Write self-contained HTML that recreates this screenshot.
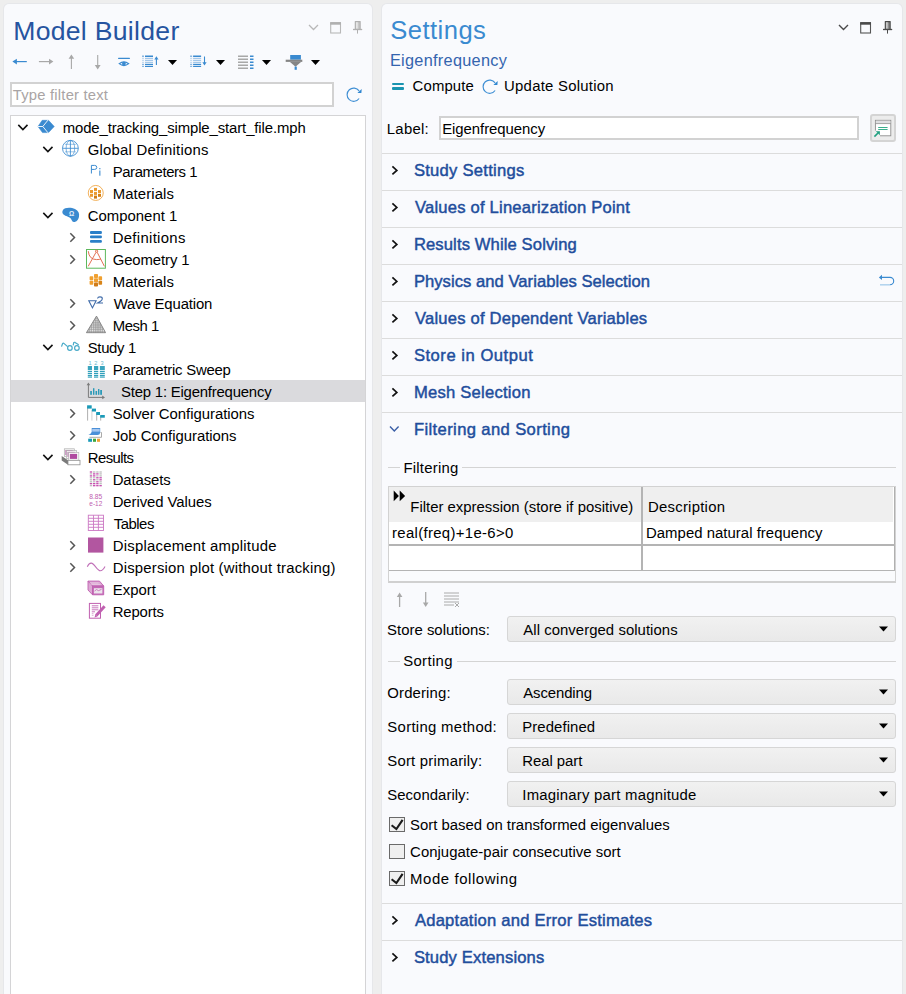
<!DOCTYPE html>
<html><head><meta charset="utf-8"><style>
html,body{margin:0;padding:0;}
body{width:906px;height:994px;overflow:hidden;position:relative;background:#eeeeee;font-family:"Liberation Sans",sans-serif;}
.t{position:absolute;white-space:nowrap;line-height:1;font-family:"Liberation Sans",sans-serif;}
svg{overflow:visible}
</style></head><body>
<div style="position:absolute;left:4px;top:4px;width:368px;height:1000px;background:#f9fafd;border-radius:5px;box-shadow:0 0 0 1px #e6e7ea;"></div>
<div style="position:absolute;left:382px;top:4px;width:520px;height:1000px;background:#f9fafd;border-radius:5px;box-shadow:0 0 0 1px #e6e7ea;"></div>
<div class="t" style="left:13.20px;top:17.88px;font-size:26.60px;color:#2654a0;letter-spacing:0.288px;">Model Builder</div>
<svg style="position:absolute;left:302px;top:18px" width="64" height="20" viewBox="0 0 64 20"><path d="M7 7 L11.5 11.5 L16 7" fill="none" stroke="#b8b8b8" stroke-width="1.3"/><rect x="28.7" y="5" width="9.8" height="10" fill="none" stroke="#b8b8b8" stroke-width="1.1"/><rect x="28.2" y="4.1" width="10.8" height="2.6" fill="#b0b0b0"/><rect x="53" y="3.3" width="5.4" height="8" fill="#c8c8c8"/><path d="M53.3 3.3 V11.3 M58.1 3.3 V11.3 M53 3.6 H58.4" stroke="#b0b0b0" stroke-width="1.1"/><rect x="54.2" y="4.2" width="1.4" height="6.5" fill="#eeeeee"/><path d="M51 11.5 H60.2" stroke="#b0b0b0" stroke-width="1.3"/><path d="M55.5 11.5 V15.6" stroke="#b0b0b0" stroke-width="1"/></svg>
<svg style="position:absolute;left:10px;top:52px" width="320" height="20" viewBox="0 0 320 20"><path d="M6 9.6 H16.8" stroke="#3a8ad0" stroke-width="1.2"/><path d="M2.4 9.6 L6.9 6.7 V12.5 Z" fill="#3a8ad0"/><path d="M28.9 9.6 H40" stroke="#a8a8a8" stroke-width="1.2"/><path d="M43.4 9.6 L39 6.7 V12.5 Z" fill="#a8a8a8"/><path d="M61.4 6 V16.9" stroke="#a8a8a8" stroke-width="1.1"/><path d="M61.4 2.5 L58.6 6.8 H64.2 Z" fill="#a8a8a8"/><path d="M87.7 3.1 V13.5" stroke="#a8a8a8" stroke-width="1.1"/><path d="M87.7 17.6 L84.8 12.9 H90.6 Z" fill="#a8a8a8"/><path d="M108.6 6.3 H119.4" stroke="#3a8ad0" stroke-width="1.3" stroke-linecap="round"/><path d="M109.2 11.65 Q113.9 7.9 118.7 11.65 Q113.9 15.4 109.2 11.65 Z" fill="none" stroke="#3a8ad0" stroke-width="1.2"/><circle cx="113.9" cy="11.65" r="1.9" fill="#3a8ad0"/><rect x="132.0" y="3.5" width="2" height="1.5" fill="#3a8ad0" opacity="0.60"/><rect x="135.0" y="3.5" width="8" height="1.5" fill="#3a8ad0" opacity="1.00"/><rect x="132.0" y="5.8" width="2" height="1.2" fill="#3a8ad0" opacity="0.27"/><rect x="135.0" y="5.8" width="8" height="1.2" fill="#3a8ad0" opacity="0.45"/><rect x="132.0" y="7.8" width="2" height="1.2" fill="#3a8ad0" opacity="0.27"/><rect x="135.0" y="7.8" width="8" height="1.2" fill="#3a8ad0" opacity="0.45"/><rect x="132.0" y="9.8" width="2" height="1.2" fill="#3a8ad0" opacity="0.27"/><rect x="135.0" y="9.8" width="8" height="1.2" fill="#3a8ad0" opacity="0.45"/><rect x="132.0" y="11.8" width="2" height="1.2" fill="#3a8ad0" opacity="0.60"/><rect x="135.0" y="11.8" width="8" height="1.2" fill="#3a8ad0" opacity="1.00"/><rect x="132.0" y="13.8" width="2" height="1.2" fill="#3a8ad0" opacity="0.60"/><rect x="135.0" y="13.8" width="8" height="1.2" fill="#3a8ad0" opacity="1.00"/><path d="M146.4 6 V13" stroke="#3a8ad0" stroke-width="1.1"/><path d="M146.4 4.3 L144.3 7.6 H148.5 Z" fill="#3a8ad0"/><path d="M158 8 H167 L162.5 13 Z" fill="#000"/><rect x="180.1" y="3.5" width="2" height="1.5" fill="#3a8ad0" opacity="0.60"/><rect x="183.1" y="3.5" width="8" height="1.5" fill="#3a8ad0" opacity="1.00"/><rect x="180.1" y="5.8" width="2" height="1.2" fill="#3a8ad0" opacity="0.27"/><rect x="183.1" y="5.8" width="8" height="1.2" fill="#3a8ad0" opacity="0.45"/><rect x="180.1" y="7.8" width="2" height="1.2" fill="#3a8ad0" opacity="0.27"/><rect x="183.1" y="7.8" width="8" height="1.2" fill="#3a8ad0" opacity="0.45"/><rect x="180.1" y="9.8" width="2" height="1.2" fill="#3a8ad0" opacity="0.27"/><rect x="183.1" y="9.8" width="8" height="1.2" fill="#3a8ad0" opacity="0.45"/><rect x="180.1" y="11.8" width="2" height="1.2" fill="#3a8ad0" opacity="0.60"/><rect x="183.1" y="11.8" width="8" height="1.2" fill="#3a8ad0" opacity="1.00"/><rect x="180.1" y="13.8" width="2" height="1.2" fill="#3a8ad0" opacity="0.60"/><rect x="183.1" y="13.8" width="8" height="1.2" fill="#3a8ad0" opacity="1.00"/><path d="M194.5 4.5 V11.5" stroke="#3a8ad0" stroke-width="1.1"/><path d="M194.5 13.6 L192.4 10.3 H196.6 Z" fill="#3a8ad0"/><path d="M206 8 H215 L210.5 13 Z" fill="#000"/><g fill="#a8a8a8"><rect x="228" y="3.5" width="10" height="1.5"/><rect x="228" y="6.5" width="10" height="1.5"/><rect x="228" y="9.5" width="10" height="1.5"/><rect x="228" y="12.5" width="10" height="1.5"/><rect x="228" y="15.5" width="10" height="1.5"/></g><g fill="#3a8ad0"><rect x="240" y="3.5" width="3.5" height="1.5"/><rect x="240" y="6.5" width="3.5" height="1.5"/><rect x="240" y="9.5" width="3.5" height="1.5"/><rect x="240" y="12.5" width="3.5" height="1.5"/><rect x="240" y="15.5" width="3.5" height="1.5"/></g><path d="M252 8 H261 L256.5 13 Z" fill="#000"/><rect x="280.2" y="3" width="10.7" height="4.7" fill="#3a8ad0"/><rect x="275.7" y="7.7" width="16.6" height="2.2" fill="#858585"/><path d="M280 9.9 H291 L285.5 14.8 Z" fill="#858585"/><rect x="284.6" y="14.6" width="2.2" height="3.2" fill="#3a8ad0"/><path d="M301 8 H310 L305.5 13 Z" fill="#000"/></svg>
<div style="position:absolute;left:10px;top:82.2px;width:323.8px;height:24.6px;background:#fff;box-sizing:border-box;border:2px solid #d2d2d2;"></div>
<div class="t" style="left:12.80px;top:88.17px;font-size:14.80px;color:#a9a4a4;letter-spacing:0.205px;">Type filter text</div>
<svg style="position:absolute;left:344px;top:86px" width="20" height="20" viewBox="0 0 20 20"><path d="M15.1 4.9 A6.6 6.6 0 1 0 15.1 12.5" fill="none" stroke="#3f8fd4" stroke-width="1.15"/><path d="M17.7 3 L17.4 7 L13.4 7 Z" fill="#2f86d0"/></svg>
<div style="position:absolute;left:10px;top:115px;width:356px;height:900px;background:#fff;box-sizing:border-box;border:1px solid #d4d4d6;"></div>
<div style="position:absolute;left:11px;top:380px;width:354px;height:21.6px;background:#dadadd;"></div>
<svg style="position:absolute;left:16.5px;top:121px" width="12" height="10" viewBox="0 0 12 10"><path d="M1.3 3.9 L5.9 8.5 L10.5 3.9" fill="none" stroke="#111" stroke-width="1.6"/></svg>
<svg style="position:absolute;left:37px;top:116px" width="22" height="22" viewBox="0 0 22 22"><path d="M1 10.5 L5.2 4.3 L11.5 4.3 L17.2 10.5 L11.5 16.6 L5.5 16.6 Z" fill="#3a8ad0" stroke="#3a8ad0" stroke-width="0.6" stroke-linejoin="round"/><path d="M0.6 10.5 H5.8 L11 4.1 M5.8 10.5 L11 16.8" fill="none" stroke="#fff" stroke-width="0.9"/></svg>
<div class="t" style="left:62.70px;top:120.69px;font-size:14.90px;color:#000;letter-spacing:-0.106px;">mode_tracking_simple_start_file.mph</div>
<svg style="position:absolute;left:41.5px;top:143px" width="12" height="10" viewBox="0 0 12 10"><path d="M1.3 3.9 L5.9 8.5 L10.5 3.9" fill="none" stroke="#111" stroke-width="1.6"/></svg>
<svg style="position:absolute;left:62px;top:138px" width="22" height="22" viewBox="0 0 22 22"><g fill="none" stroke="#3a8ad0" stroke-width="0.85"><circle cx="8.4" cy="10.3" r="7.9"/><ellipse cx="8.4" cy="10.3" rx="4.3" ry="7.9" opacity="0.75"/><path d="M8.4 2.4 V18.2 M0.5 10.3 H16.3"/><path d="M3 6.3 H13.8 M3 13.8 H13.8" opacity="0.6"/></g></svg>
<div class="t" style="left:87.70px;top:142.69px;font-size:14.90px;color:#000;letter-spacing:0.237px;">Global Definitions</div>
<svg style="position:absolute;left:87px;top:160px" width="22" height="22" viewBox="0 0 22 22"><path d="M4.4 13.5 V5.4 H7.6 Q9.8 5.4 9.8 7.4 Q9.8 9.4 7.6 9.4 H4.4" fill="none" stroke="#3a8ad0" stroke-width="1"/><rect x="12.3" y="8" width="1.1" height="1.3" fill="#3a8ad0"/><rect x="12.3" y="10.5" width="1.1" height="5.2" fill="#3a8ad0"/></svg>
<div class="t" style="left:112.70px;top:164.69px;font-size:14.90px;color:#000;letter-spacing:-0.403px;">Parameters 1</div>
<svg style="position:absolute;left:87px;top:182px" width="22" height="22" viewBox="0 0 22 22"><circle cx="8.75" cy="10.95" r="7.5" fill="none" stroke="#f0a848" stroke-width="0.9"/><g fill="#eb9a2e"><rect x="7" y="5.9" width="3" height="3"/><rect x="3" y="8" width="3" height="3"/><rect x="7" y="9.9" width="3" height="3"/><rect x="11" y="8" width="3" height="3"/><rect x="3" y="11.8" width="3" height="3"/><rect x="11" y="11.8" width="3" height="3" fill="#d88010"/><rect x="7" y="13.6" width="3" height="3" fill="#d07a10"/></g></svg>
<div class="t" style="left:112.70px;top:186.69px;font-size:14.90px;color:#000;letter-spacing:0.107px;">Materials</div>
<svg style="position:absolute;left:41.5px;top:209px" width="12" height="10" viewBox="0 0 12 10"><path d="M1.3 3.9 L5.9 8.5 L10.5 3.9" fill="none" stroke="#111" stroke-width="1.6"/></svg>
<svg style="position:absolute;left:62px;top:204px" width="22" height="22" viewBox="0 0 22 22"><path d="M1 6 C2.5 3.2 9 3 13 5 C16.5 6.8 17.6 9.5 17 12.5 C16.5 16 14 18.3 11.8 18 C9.6 17.7 10 15 7.5 13.5 C5 12.2 1.2 11.5 0.4 8.8 C0.2 7.8 0.5 6.8 1 6 Z" fill="#3a8ad0"/><text x="7" y="11.7" font-family="Liberation Sans" font-size="6.5" font-weight="bold" fill="#e8f0fa">Ω</text></svg>
<div class="t" style="left:87.70px;top:208.69px;font-size:14.90px;color:#000;letter-spacing:0.024px;">Component 1</div>
<svg style="position:absolute;left:66.5px;top:230px" width="10" height="14" viewBox="0 0 10 14"><path d="M3.3 3.3 L7.5 7.5 L3.3 11.7" fill="none" stroke="#555" stroke-width="1.5"/></svg>
<svg style="position:absolute;left:87px;top:226px" width="22" height="22" viewBox="0 0 22 22"><g fill="#2a7fc8"><rect x="3" y="5.1" width="11.9" height="2.8" rx="1"/><rect x="3" y="9.6" width="11.9" height="2.6" rx="1"/><rect x="3" y="14" width="11.9" height="2.8" rx="1"/></g></svg>
<div class="t" style="left:112.70px;top:230.69px;font-size:14.90px;color:#000;letter-spacing:0.313px;">Definitions</div>
<svg style="position:absolute;left:66.5px;top:252px" width="10" height="14" viewBox="0 0 10 14"><path d="M3.3 3.3 L7.5 7.5 L3.3 11.7" fill="none" stroke="#555" stroke-width="1.5"/></svg>
<svg style="position:absolute;left:87px;top:248px" width="22" height="22" viewBox="0 0 22 22"><rect x="-0.5" y="1.5" width="18.9" height="18.7" fill="#fff" stroke="#5cb85c" stroke-width="1"/><g fill="none" stroke="#e0684a" stroke-width="0.95"><path d="M1.3 3.2 Q2 11.5 9.6 11.6 Q13 11.6 14 10.8"/><path d="M9 4.3 L1.2 18.3 M10.2 4.3 L17.4 18.3"/><circle cx="9.6" cy="3.2" r="1.1"/></g></svg>
<div class="t" style="left:112.70px;top:252.69px;font-size:14.90px;color:#000;letter-spacing:-0.093px;">Geometry 1</div>
<svg style="position:absolute;left:87px;top:270px" width="22" height="22" viewBox="0 0 22 22"><g fill="#f0a030"><rect x="7" y="4" width="4" height="4" rx="0.8"/><rect x="2.6" y="6.3" width="3.7" height="4" rx="0.8"/><rect x="7" y="8.3" width="4" height="4" rx="0.8"/><rect x="11.5" y="6.3" width="3.6" height="4" rx="0.8"/><rect x="2.6" y="10.8" width="3.7" height="4" rx="0.8"/><rect x="11.5" y="10.8" width="3.6" height="4" rx="0.8" fill="#d88418"/><rect x="7" y="12.6" width="4" height="4" rx="0.8" fill="#d07c18"/></g></svg>
<div class="t" style="left:112.70px;top:274.69px;font-size:14.90px;color:#000;letter-spacing:0.107px;">Materials</div>
<svg style="position:absolute;left:66.5px;top:296px" width="10" height="14" viewBox="0 0 10 14"><path d="M3.3 3.3 L7.5 7.5 L3.3 11.7" fill="none" stroke="#555" stroke-width="1.5"/></svg>
<svg style="position:absolute;left:87px;top:292px" width="22" height="22" viewBox="0 0 22 22"><path d="M1.8 8.7 H9.1 L5.45 15.9 Z" fill="none" stroke="#3e6aa8" stroke-width="1.1" stroke-linejoin="miter"/><path d="M10.5 6.5 Q10.8 4.9 13 4.9 Q15.3 4.9 15.3 6.7 Q15.3 8 13.5 9.2 L10.5 11 H16" fill="none" stroke="#3e6aa8" stroke-width="1.1"/></svg>
<div class="t" style="left:113.70px;top:296.69px;font-size:14.90px;color:#000;letter-spacing:-0.150px;">Wave Equation</div>
<svg style="position:absolute;left:66.5px;top:318px" width="10" height="14" viewBox="0 0 10 14"><path d="M3.3 3.3 L7.5 7.5 L3.3 11.7" fill="none" stroke="#555" stroke-width="1.5"/></svg>
<svg style="position:absolute;left:87px;top:314px" width="22" height="22" viewBox="0 0 22 22"><defs><pattern id="mp" width="2.2" height="2.2" patternUnits="userSpaceOnUse"><rect width="2.2" height="2.2" fill="#a0a0a0"/><circle cx="1.1" cy="1.1" r="0.65" fill="#e4e4e4"/></pattern></defs><path d="M9.5 2.1 L18.6 18.7 H-0.6 Z" fill="url(#mp)" stroke="#808080" stroke-width="0.9" stroke-linejoin="round"/></svg>
<div class="t" style="left:112.70px;top:318.69px;font-size:14.90px;color:#000;letter-spacing:-0.432px;">Mesh 1</div>
<svg style="position:absolute;left:41.5px;top:341px" width="12" height="10" viewBox="0 0 12 10"><path d="M1.3 3.9 L5.9 8.5 L10.5 3.9" fill="none" stroke="#111" stroke-width="1.6"/></svg>
<svg style="position:absolute;left:62px;top:336px" width="22" height="22" viewBox="0 0 22 22"><g fill="none" stroke="#48aac8" stroke-width="1.2"><path d="M-0.5 10.6 L0.6 7.6 Q1.2 6.8 2.2 7.6 L5.6 10.6"/><circle cx="7.9" cy="12" r="2.3"/><circle cx="14.9" cy="12" r="2.3"/><path d="M11.2 9.3 L11.7 6.6 Q12.2 6 13 6.4 L16.7 8.8"/></g></svg>
<div class="t" style="left:87.70px;top:340.69px;font-size:14.90px;color:#000;letter-spacing:-0.305px;">Study 1</div>
<svg style="position:absolute;left:87px;top:358px" width="22" height="22" viewBox="0 0 22 22"><g fill="#1a96b4"><g opacity="0.85"><rect x="0.8" y="8" width="4.2" height="4"/><rect x="7" y="8" width="4.2" height="4"/><rect x="12.9" y="8" width="4.9" height="4"/></g><rect x="0.8" y="12.8" width="4.2" height="1.1"/><rect x="7" y="12.8" width="4.2" height="1.1"/><rect x="12.9" y="12.8" width="4.9" height="1.1"/><rect x="0.8" y="14.8" width="4.2" height="1.1"/><rect x="7" y="14.8" width="4.2" height="1.1"/><rect x="12.9" y="14.8" width="4.9" height="1.1"/><rect x="0.8" y="16.8" width="4.2" height="1.1"/><rect x="7" y="16.8" width="4.2" height="1.1"/><rect x="12.9" y="16.8" width="4.9" height="1.1"/><rect x="0.8" y="18.5" width="4.2" height="1.1"/><rect x="7" y="18.5" width="4.2" height="1.1"/><rect x="12.9" y="18.5" width="4.9" height="1.1"/></g><g fill="#6ab8cc" font-family="Liberation Sans" font-size="5.6"><text x="1.5" y="7">1</text><text x="7.3" y="7">2</text><text x="13.4" y="7">3</text></g></svg>
<div class="t" style="left:112.70px;top:362.69px;font-size:14.90px;color:#000;letter-spacing:-0.236px;">Parametric Sweep</div>
<svg style="position:absolute;left:87px;top:380px" width="22" height="22" viewBox="0 0 22 22"><path d="M1.4 3.8 V17.4 H16.6" fill="none" stroke="#7a7a7a" stroke-width="1"/><path d="M1.4 2.4 L-0.4 5.2 H3.2 Z M18 17.4 L15.2 15.6 V19.2 Z" fill="#7a7a7a"/><g fill="#2a9ab8"><rect x="3.2" y="11" width="1.7" height="3.8"/><rect x="6" y="8.2" width="1.4" height="6.6"/><rect x="8.5" y="11" width="1.6" height="3.8"/><rect x="11" y="9" width="1.4" height="5.8"/><rect x="13.2" y="10" width="1.8" height="4.8"/></g></svg>
<div class="t" style="left:121.10px;top:384.69px;font-size:14.90px;color:#000;letter-spacing:-0.205px;">Step 1: Eigenfrequency</div>
<svg style="position:absolute;left:66.5px;top:406px" width="10" height="14" viewBox="0 0 10 14"><path d="M3.3 3.3 L7.5 7.5 L3.3 11.7" fill="none" stroke="#555" stroke-width="1.5"/></svg>
<svg style="position:absolute;left:87px;top:402px" width="22" height="22" viewBox="0 0 22 22"><g fill="#b0b0b0"><rect x="0.1" y="5" width="1" height="13.6"/><rect x="4.4" y="8" width="1" height="10.6" opacity="0.6"/><rect x="9.2" y="11" width="1" height="7.6"/><rect x="13.2" y="14" width="1" height="4.6"/></g><g fill="#1a9ab8"><rect x="0.1" y="3.3" width="4.6" height="3.3"/><rect x="4.9" y="6.6" width="4.1" height="2.9"/><rect x="9.2" y="10" width="3.8" height="3"/><rect x="13.2" y="13" width="4.6" height="2.7"/></g></svg>
<div class="t" style="left:112.70px;top:406.69px;font-size:14.90px;color:#000;letter-spacing:-0.028px;">Solver Configurations</div>
<svg style="position:absolute;left:66.5px;top:428px" width="10" height="14" viewBox="0 0 10 14"><path d="M3.3 3.3 L7.5 7.5 L3.3 11.7" fill="none" stroke="#555" stroke-width="1.5"/></svg>
<svg style="position:absolute;left:87px;top:424px" width="22" height="22" viewBox="0 0 22 22"><path d="M4.7 4.1 H13.2 V8.5 Q13 11 10.5 11 H1.4 Q3.5 10.3 4.7 8 Z" fill="#4a90d8"/><rect x="5.2" y="5" width="7.5" height="2.6" fill="#a8c8f0"/><path d="M13.5 8.5 H14.5 V13.3 H2.4" fill="none" stroke="#a0a0a0" stroke-width="0.9"/><rect x="1.2" y="14.7" width="3.8" height="3.1" fill="#1a9ab8"/><rect x="6" y="14.7" width="3" height="3.1" fill="#3ca83c"/><rect x="10" y="14.7" width="3" height="3.1" fill="#f0a030"/></svg>
<div class="t" style="left:112.70px;top:428.69px;font-size:14.90px;color:#000;letter-spacing:-0.020px;">Job Configurations</div>
<svg style="position:absolute;left:41.5px;top:451px" width="12" height="10" viewBox="0 0 12 10"><path d="M1.3 3.9 L5.9 8.5 L10.5 3.9" fill="none" stroke="#111" stroke-width="1.6"/></svg>
<svg style="position:absolute;left:62px;top:446px" width="22" height="22" viewBox="0 0 22 22"><path d="M-0.3 9.9 L6 14.3 V18.8 L-0.3 14.5 Z" fill="#7a7a7a"/><rect x="2.3" y="2.8" width="10" height="7.8" fill="#f4f4f4" stroke="#b0b0b0" stroke-width="0.7"/><rect x="3.5" y="4" width="7.2" height="5" fill="#b04aa0"/><rect x="4.4" y="4.6" width="10" height="7.8" fill="#f4f4f4" stroke="#b0b0b0" stroke-width="0.7"/><rect x="5.6" y="5.9" width="7.2" height="5" fill="#b04aa0"/><rect x="6.6" y="6.5" width="10.2" height="7.8" fill="#fafafa" stroke="#b8b8b8" stroke-width="0.7"/><rect x="7.9" y="7.9" width="7.2" height="5" fill="#b04aa0"/><rect x="6" y="14.3" width="12" height="4.5" fill="#fff" stroke="#909090" stroke-width="0.8"/></svg>
<div class="t" style="left:87.70px;top:450.69px;font-size:14.90px;color:#000;letter-spacing:-0.547px;">Results</div>
<svg style="position:absolute;left:66.5px;top:472px" width="10" height="14" viewBox="0 0 10 14"><path d="M3.3 3.3 L7.5 7.5 L3.3 11.7" fill="none" stroke="#555" stroke-width="1.5"/></svg>
<svg style="position:absolute;left:87px;top:468px" width="22" height="22" viewBox="0 0 22 22"><rect x="2.8" y="3.4" width="2.4" height="1.2" fill="#c040a8"/><rect x="6.0" y="3.4" width="2.4" height="1.2" fill="#b8b8b8"/><rect x="9.2" y="3.4" width="2.4" height="1.2" fill="#b8b8b8"/><rect x="12.4" y="3.4" width="2.4" height="1.2" fill="#b8b8b8"/><rect x="2.8" y="5.3" width="2.4" height="1.2" fill="#b8b8b8"/><rect x="6.0" y="5.3" width="2.4" height="1.2" fill="#c040a8"/><rect x="9.2" y="5.3" width="2.4" height="1.2" fill="#c040a8"/><rect x="12.4" y="5.3" width="2.4" height="1.2" fill="#b8b8b8"/><rect x="2.8" y="7.3" width="2.4" height="1.2" fill="#c040a8"/><rect x="6.0" y="7.3" width="2.4" height="1.2" fill="#c040a8"/><rect x="9.2" y="7.3" width="2.4" height="1.2" fill="#b8b8b8"/><rect x="12.4" y="7.3" width="2.4" height="1.2" fill="#b8b8b8"/><rect x="2.8" y="9.2" width="2.4" height="1.2" fill="#b8b8b8"/><rect x="6.0" y="9.2" width="2.4" height="1.2" fill="#b8b8b8"/><rect x="9.2" y="9.2" width="2.4" height="1.2" fill="#c040a8"/><rect x="12.4" y="9.2" width="2.4" height="1.2" fill="#c040a8"/><rect x="2.8" y="11.2" width="2.4" height="1.2" fill="#b8b8b8"/><rect x="6.0" y="11.2" width="2.4" height="1.2" fill="#c040a8"/><rect x="9.2" y="11.2" width="2.4" height="1.2" fill="#b8b8b8"/><rect x="12.4" y="11.2" width="2.4" height="1.2" fill="#c040a8"/><rect x="2.8" y="13.2" width="2.4" height="1.2" fill="#b8b8b8"/><rect x="6.0" y="13.2" width="2.4" height="1.2" fill="#b8b8b8"/><rect x="9.2" y="13.2" width="2.4" height="1.2" fill="#c040a8"/><rect x="12.4" y="13.2" width="2.4" height="1.2" fill="#b8b8b8"/><rect x="2.8" y="15.1" width="2.4" height="1.2" fill="#c040a8"/><rect x="6.0" y="15.1" width="2.4" height="1.2" fill="#c040a8"/><rect x="9.2" y="15.1" width="2.4" height="1.2" fill="#c040a8"/><rect x="12.4" y="15.1" width="2.4" height="1.2" fill="#b8b8b8"/><rect x="2.8" y="17.1" width="2.4" height="1.2" fill="#b8b8b8"/><rect x="6.0" y="17.1" width="2.4" height="1.2" fill="#c040a8"/><rect x="9.2" y="17.1" width="2.4" height="1.2" fill="#c040a8"/><rect x="12.4" y="17.1" width="2.4" height="1.2" fill="#c040a8"/></svg>
<div class="t" style="left:112.70px;top:472.69px;font-size:14.90px;color:#000;letter-spacing:-0.114px;">Datasets</div>
<svg style="position:absolute;left:87px;top:490px" width="22" height="22" viewBox="0 0 22 22"><g fill="#c060b0" font-family="Liberation Sans" font-size="6.4"><text x="2.3" y="9.4" textLength="13" lengthAdjust="spacingAndGlyphs">8.85</text><text x="2.3" y="16.3" textLength="13" lengthAdjust="spacingAndGlyphs">e-12</text></g></svg>
<div class="t" style="left:112.70px;top:494.69px;font-size:14.90px;color:#000;letter-spacing:-0.072px;">Derived Values</div>
<svg style="position:absolute;left:87px;top:512px" width="22" height="22" viewBox="0 0 22 22"><g fill="none" stroke="#cc78c4" stroke-width="0.9"><rect x="1.3" y="3.2" width="15.2" height="15.3"/><path d="M6.5 3.2 V18.5 M11.4 3.2 V18.5 M1.3 6.3 H16.5 M1.3 9.3 H16.5 M1.3 12.3 H16.5 M1.3 15.3 H16.5"/></g></svg>
<div class="t" style="left:113.70px;top:516.69px;font-size:14.90px;color:#000;letter-spacing:-0.474px;">Tables</div>
<svg style="position:absolute;left:66.5px;top:538px" width="10" height="14" viewBox="0 0 10 14"><path d="M3.3 3.3 L7.5 7.5 L3.3 11.7" fill="none" stroke="#555" stroke-width="1.5"/></svg>
<svg style="position:absolute;left:87px;top:534px" width="22" height="22" viewBox="0 0 22 22"><rect x="1" y="3.5" width="15.4" height="15.1" fill="#b256a0"/></svg>
<div class="t" style="left:112.70px;top:538.69px;font-size:14.90px;color:#000;letter-spacing:0.233px;">Displacement amplitude</div>
<svg style="position:absolute;left:66.5px;top:560px" width="10" height="14" viewBox="0 0 10 14"><path d="M3.3 3.3 L7.5 7.5 L3.3 11.7" fill="none" stroke="#555" stroke-width="1.5"/></svg>
<svg style="position:absolute;left:87px;top:556px" width="22" height="22" viewBox="0 0 22 22"><path d="M0.3 10.8 C1.5 8 3 7 4.3 7.1 C7.5 7.3 10 14.8 13.4 14.8 C15.5 14.8 17 12.5 18 10.6" fill="none" stroke="#c070b8" stroke-width="1.1"/></svg>
<div class="t" style="left:112.70px;top:560.69px;font-size:14.90px;color:#000;letter-spacing:0.205px;">Dispersion plot (without tracking)</div>
<svg style="position:absolute;left:87px;top:578px" width="22" height="22" viewBox="0 0 22 22"><g stroke="#c060b0" stroke-width="0.9" stroke-linejoin="round"><path d="M1 3.1 H12.5 L16.7 8 H5.5 Z" fill="#dca8d4"/><path d="M1 3.1 L5.5 8 V16.8 L1 12 Z" fill="#dca8d4"/><rect x="5.5" y="8" width="11.2" height="8.8" fill="#c468b6"/></g><rect x="6.9" y="10.2" width="8.5" height="5.3" fill="#ece4ec"/><path d="M7.5 13 L9.5 11.6 L11.5 12.6 L14.5 11.4" fill="none" stroke="#c060b0" stroke-width="0.8"/><path d="M2.5 5 L11.5 5 M3.5 6.6 L13.5 6.6" stroke="#f4e4f0" stroke-width="0.5"/></svg>
<div class="t" style="left:112.70px;top:582.69px;font-size:14.90px;color:#000;letter-spacing:0.047px;">Export</div>
<svg style="position:absolute;left:87px;top:600px" width="22" height="22" viewBox="0 0 22 22"><rect x="2.4" y="3.4" width="11.1" height="14.8" fill="#fff" stroke="#c060b0" stroke-width="1"/><path d="M4.8 5.8 H11.4 M4.8 7.8 H11.4 M4.8 9.8 H11.4 M4.8 11.8 H8" stroke="#c468b6" stroke-width="0.9"/><path d="M4.8 13.6 H6.5 M4.8 15.3 H6.5" stroke="#d8a8d0" stroke-width="0.9"/><path d="M9.2 15.6 L17.6 6.2" stroke="#c060b0" stroke-width="3"/><path d="M7.6 17.4 L8.3 14.6 L10.3 16.4 Z" fill="#c060b0"/></svg>
<div class="t" style="left:112.70px;top:604.69px;font-size:14.90px;color:#000;letter-spacing:-0.145px;">Reports</div>
<div class="t" style="left:390.20px;top:18.33px;font-size:25.60px;color:#3a8ad0;letter-spacing:0.457px;">Settings</div>
<svg style="position:absolute;left:832px;top:18px" width="64" height="20" viewBox="0 0 64 20"><path d="M7 7 L11.5 11.5 L16 7" fill="none" stroke="#4a4a4a" stroke-width="1.4"/><rect x="28.7" y="5" width="9.8" height="10" fill="none" stroke="#555" stroke-width="1.1"/><rect x="28.2" y="4.1" width="10.8" height="2.6" fill="#4a4a4a"/><rect x="53" y="3.3" width="5.4" height="8" fill="#8a8a8a"/><path d="M53.3 3.3 V11.3 M58.1 3.3 V11.3 M53 3.6 H58.4" stroke="#4a4a4a" stroke-width="1.1"/><rect x="54.2" y="4.2" width="1.4" height="6.5" fill="#d8d8d8"/><path d="M51 11.5 H60.2" stroke="#4a4a4a" stroke-width="1.3"/><path d="M55.5 11.5 V15.6" stroke="#4a4a4a" stroke-width="1"/></svg>
<div class="t" style="left:389.90px;top:52.40px;font-size:16.30px;color:#3464ae;letter-spacing:0.294px;">Eigenfrequency</div>
<div style="position:absolute;left:392px;top:82.9px;width:12px;height:2.3px;background:#1a94b0;border-radius:1px;"></div>
<div style="position:absolute;left:392px;top:87.1px;width:12px;height:2.8px;background:#1a94b0;border-radius:1px;"></div>
<div class="t" style="left:412.60px;top:79.09px;font-size:14.90px;color:#000;letter-spacing:0.124px;">Compute</div>
<svg style="position:absolute;left:480px;top:78px" width="20" height="20" viewBox="0 0 20 20"><path d="M15.1 4.9 A6.6 6.6 0 1 0 15.1 12.5" fill="none" stroke="#3f8fd4" stroke-width="1.15"/><path d="M17.7 3 L17.4 7 L13.4 7 Z" fill="#2f86d0"/></svg>
<div class="t" style="left:504.10px;top:79.09px;font-size:14.90px;color:#000;letter-spacing:0.248px;">Update Solution</div>
<div class="t" style="left:386.80px;top:122.19px;font-size:14.90px;color:#000;letter-spacing:0.261px;">Label:</div>
<div style="position:absolute;left:439px;top:116.3px;width:420px;height:23.5px;background:#fff;box-sizing:border-box;border:2px solid #d2d2d2;"></div>
<div class="t" style="left:442.20px;top:122.19px;font-size:14.90px;color:#000;letter-spacing:-0.042px;">Eigenfrequency</div>
<div style="position:absolute;left:870px;top:114px;width:26px;height:27.5px;background:#ececec;box-sizing:border-box;border:2px solid #d4d4d4;border-radius:3px;"></div>
<svg style="position:absolute;left:872px;top:116px" width="22" height="24" viewBox="0 0 22 24"><rect x="3.4" y="4.3" width="15.4" height="15.5" fill="#fff" stroke="#8e8e8e" stroke-width="0.9"/><rect x="3.9" y="4.8" width="14.4" height="2.6" fill="#dedee0"/><path d="M3.4 7.6 H18.8" stroke="#8e8e8e" stroke-width="0.8"/><path d="M6.6 11.4 H15.2 M6.6 13.5 H15.2" stroke="#3aae8c" stroke-width="1.05" stroke-linecap="round"/><rect x="1.5" y="14.6" width="6.5" height="7" fill="#ededed"/><path d="M2.4 20.6 L6 17" stroke="#20a080" stroke-width="1.6"/><path d="M3.8 15.3 L7.9 15.2 L7.8 19.3 Z" fill="#20a080"/></svg>
<div style="position:absolute;left:382px;top:153px;width:520px;height:1.3px;background:#dcdcdc;"></div>
<svg style="position:absolute;left:388px;top:163px" width="12" height="14" viewBox="0 0 12 14"><path d="M4.4 3.4 L8.8 7.4 L4.4 11.3" fill="none" stroke="#111" stroke-width="1.7"/></svg>
<div class="t" style="left:413.90px;top:163.15px;font-size:16.60px;color:#214d9c;letter-spacing:0.266px;-webkit-text-stroke:0.45px #214d9c;">Study Settings</div>
<div style="position:absolute;left:382px;top:190px;width:520px;height:1.3px;background:#dcdcdc;"></div>
<svg style="position:absolute;left:388px;top:200px" width="12" height="14" viewBox="0 0 12 14"><path d="M4.4 3.4 L8.8 7.4 L4.4 11.3" fill="none" stroke="#111" stroke-width="1.7"/></svg>
<div class="t" style="left:414.90px;top:200.15px;font-size:16.60px;color:#214d9c;letter-spacing:0.212px;-webkit-text-stroke:0.45px #214d9c;">Values of Linearization Point</div>
<div style="position:absolute;left:382px;top:227px;width:520px;height:1.3px;background:#dcdcdc;"></div>
<svg style="position:absolute;left:388px;top:237px" width="12" height="14" viewBox="0 0 12 14"><path d="M4.4 3.4 L8.8 7.4 L4.4 11.3" fill="none" stroke="#111" stroke-width="1.7"/></svg>
<div class="t" style="left:413.90px;top:237.15px;font-size:16.60px;color:#214d9c;letter-spacing:0.119px;-webkit-text-stroke:0.45px #214d9c;">Results While Solving</div>
<div style="position:absolute;left:382px;top:264px;width:520px;height:1.3px;background:#dcdcdc;"></div>
<svg style="position:absolute;left:388px;top:274px" width="12" height="14" viewBox="0 0 12 14"><path d="M4.4 3.4 L8.8 7.4 L4.4 11.3" fill="none" stroke="#111" stroke-width="1.7"/></svg>
<div class="t" style="left:413.90px;top:274.15px;font-size:16.60px;color:#214d9c;letter-spacing:0.040px;-webkit-text-stroke:0.45px #214d9c;">Physics and Variables Selection</div>
<div style="position:absolute;left:382px;top:301px;width:520px;height:1.3px;background:#dcdcdc;"></div>
<svg style="position:absolute;left:388px;top:311px" width="12" height="14" viewBox="0 0 12 14"><path d="M4.4 3.4 L8.8 7.4 L4.4 11.3" fill="none" stroke="#111" stroke-width="1.7"/></svg>
<div class="t" style="left:414.90px;top:311.15px;font-size:16.60px;color:#214d9c;letter-spacing:0.211px;-webkit-text-stroke:0.45px #214d9c;">Values of Dependent Variables</div>
<div style="position:absolute;left:382px;top:338px;width:520px;height:1.3px;background:#dcdcdc;"></div>
<svg style="position:absolute;left:388px;top:348px" width="12" height="14" viewBox="0 0 12 14"><path d="M4.4 3.4 L8.8 7.4 L4.4 11.3" fill="none" stroke="#111" stroke-width="1.7"/></svg>
<div class="t" style="left:413.90px;top:348.15px;font-size:16.60px;color:#214d9c;letter-spacing:0.525px;-webkit-text-stroke:0.45px #214d9c;">Store in Output</div>
<div style="position:absolute;left:382px;top:375px;width:520px;height:1.3px;background:#dcdcdc;"></div>
<svg style="position:absolute;left:388px;top:385px" width="12" height="14" viewBox="0 0 12 14"><path d="M4.4 3.4 L8.8 7.4 L4.4 11.3" fill="none" stroke="#111" stroke-width="1.7"/></svg>
<div class="t" style="left:413.90px;top:385.15px;font-size:16.60px;color:#214d9c;letter-spacing:0.239px;-webkit-text-stroke:0.45px #214d9c;">Mesh Selection</div>
<div style="position:absolute;left:382px;top:412px;width:520px;height:1.3px;background:#dcdcdc;"></div>
<svg style="position:absolute;left:387px;top:421px" width="14" height="14" viewBox="0 0 14 14"><path d="M3 5.5 L7.3 10 L11.6 5.5" fill="none" stroke="#3a5ea6" stroke-width="1.4"/></svg>
<div class="t" style="left:413.90px;top:422.15px;font-size:16.60px;color:#214d9c;letter-spacing:0.382px;-webkit-text-stroke:0.45px #214d9c;">Filtering and Sorting</div>
<svg style="position:absolute;left:876px;top:272px" width="20" height="16" viewBox="0 0 20 16"><path d="M5.5 5.4 H14 A3.7 3.7 0 0 1 14 12.8" fill="none" stroke="#3a8ad0" stroke-width="1.1"/><path d="M14 12.8 H4" fill="none" stroke="#b0d2ee" stroke-width="1.5"/><path d="M2.9 5.4 L6 2.8 V8 Z" fill="#3a8ad0"/></svg>
<div style="position:absolute;left:388px;top:467px;width:12px;height:1px;background:#d4d4d4;"></div>
<div class="t" style="left:403.40px;top:460.69px;font-size:14.90px;color:#000;letter-spacing:0.251px;">Filtering</div>
<div style="position:absolute;left:462px;top:467px;width:434px;height:1px;background:#d4d4d4;"></div>
<div style="position:absolute;left:388px;top:486px;width:508px;height:96.5px;background:#fafbfd;box-sizing:border-box;border:1px solid #d2d2d2;border-bottom:2.6px solid #d0d0d0;"></div>
<div style="position:absolute;left:389px;top:487px;width:505.8px;height:84px;background:#fff;box-sizing:border-box;border-right:1.7px solid #b0b0b0;"></div>
<div style="position:absolute;left:389px;top:487px;width:504.2px;height:34.5px;background:#efefef;"></div>
<div style="position:absolute;left:641px;top:487px;width:1.5px;height:84px;background:#b4b4b4;"></div>
<div style="position:absolute;left:389px;top:544.4px;width:505.8px;height:1.4px;background:#b4b4b4;"></div>
<div style="position:absolute;left:389px;top:569.6px;width:505.8px;height:1.4px;background:#b4b4b4;"></div>
<svg style="position:absolute;left:392px;top:489px" width="16" height="14" viewBox="0 0 16 14"><path d="M1.7 1.6 L6.9 6.9 L1.7 12.2 Z M7.7 1.6 L13.1 6.9 L7.7 12.2 Z" fill="#000"/></svg>
<div class="t" style="left:410.30px;top:500.29px;font-size:14.90px;color:#000;letter-spacing:0.007px;">Filter expression (store if positive)</div>
<div class="t" style="left:648.00px;top:500.29px;font-size:14.90px;color:#000;letter-spacing:0.247px;">Description</div>
<div class="t" style="left:392.00px;top:526.29px;font-size:14.90px;color:#000;letter-spacing:0.334px;">real(freq)+1e-6&gt;0</div>
<div class="t" style="left:646.00px;top:526.29px;font-size:14.90px;color:#000;letter-spacing:0.039px;">Damped natural frequency</div>
<svg style="position:absolute;left:390px;top:588px" width="75" height="22" viewBox="0 0 75 22"><path d="M9.6 7 V19" stroke="#a8a8a8" stroke-width="1.3"/><path d="M9.6 4.5 L6.8 9 H12.4 Z" fill="#a8a8a8"/><path d="M35.7 4 V16" stroke="#a8a8a8" stroke-width="1.3"/><path d="M35.7 19 L32.9 14.5 H38.5 Z" fill="#a8a8a8"/><g stroke="#aaa" stroke-width="1"><path d="M54 5 H69 M54 8 H69 M54 11 H69 M54 14 H69 M54 17 H64"/><path d="M65 15 L69 19 M69 15 L65 19"/></g></svg>
<div class="t" style="left:387.10px;top:622.59px;font-size:14.90px;color:#000;letter-spacing:0.013px;">Store solutions:</div>
<div style="position:absolute;left:507px;top:616.3px;width:389px;height:25.5px;background:linear-gradient(#f1f1f1,#e9e9e9);box-sizing:border-box;border:1px solid #d6d6d6;border-radius:3px;"></div>
<div class="t" style="left:523.30px;top:623.19px;font-size:14.90px;color:#000;letter-spacing:0.053px;">All converged solutions</div>
<svg style="position:absolute;left:876px;top:624.3px" width="14" height="10" viewBox="0 0 14 10"><path d="M3 2.5 H12 L7.5 7.5 Z" fill="#000"/></svg>
<div style="position:absolute;left:388px;top:660.5px;width:12px;height:1px;background:#d4d4d4;"></div>
<div class="t" style="left:403.20px;top:654.19px;font-size:14.90px;color:#000;letter-spacing:0.348px;">Sorting</div>
<div style="position:absolute;left:456.5px;top:660.5px;width:439.5px;height:1px;background:#d4d4d4;"></div>
<div class="t" style="left:387.30px;top:686.19px;font-size:14.90px;color:#000;letter-spacing:0.149px;">Ordering:</div>
<div style="position:absolute;left:507px;top:679.3px;width:389px;height:25.5px;background:linear-gradient(#f1f1f1,#e9e9e9);box-sizing:border-box;border:1px solid #d6d6d6;border-radius:3px;"></div>
<div class="t" style="left:523.30px;top:686.19px;font-size:14.90px;color:#000;letter-spacing:-0.110px;">Ascending</div>
<svg style="position:absolute;left:876px;top:687.3px" width="14" height="10" viewBox="0 0 14 10"><path d="M3 2.5 H12 L7.5 7.5 Z" fill="#000"/></svg>
<div class="t" style="left:387.30px;top:720.19px;font-size:14.90px;color:#000;letter-spacing:0.308px;">Sorting method:</div>
<div style="position:absolute;left:507px;top:713.3px;width:389px;height:25.5px;background:linear-gradient(#f1f1f1,#e9e9e9);box-sizing:border-box;border:1px solid #d6d6d6;border-radius:3px;"></div>
<div class="t" style="left:522.30px;top:720.19px;font-size:14.90px;color:#000;letter-spacing:0.092px;">Predefined</div>
<svg style="position:absolute;left:876px;top:721.3px" width="14" height="10" viewBox="0 0 14 10"><path d="M3 2.5 H12 L7.5 7.5 Z" fill="#000"/></svg>
<div class="t" style="left:387.30px;top:754.19px;font-size:14.90px;color:#000;letter-spacing:0.215px;">Sort primarily:</div>
<div style="position:absolute;left:507px;top:747.3px;width:389px;height:25.5px;background:linear-gradient(#f1f1f1,#e9e9e9);box-sizing:border-box;border:1px solid #d6d6d6;border-radius:3px;"></div>
<div class="t" style="left:522.30px;top:754.19px;font-size:14.90px;color:#000;letter-spacing:-0.045px;">Real part</div>
<svg style="position:absolute;left:876px;top:755.3px" width="14" height="10" viewBox="0 0 14 10"><path d="M3 2.5 H12 L7.5 7.5 Z" fill="#000"/></svg>
<div class="t" style="left:387.30px;top:788.19px;font-size:14.90px;color:#000;letter-spacing:0.046px;">Secondarily:</div>
<div style="position:absolute;left:507px;top:781.3px;width:389px;height:25.5px;background:linear-gradient(#f1f1f1,#e9e9e9);box-sizing:border-box;border:1px solid #d6d6d6;border-radius:3px;"></div>
<div class="t" style="left:522.30px;top:788.19px;font-size:14.90px;color:#000;letter-spacing:0.228px;">Imaginary part magnitude</div>
<svg style="position:absolute;left:876px;top:789.3px" width="14" height="10" viewBox="0 0 14 10"><path d="M3 2.5 H12 L7.5 7.5 Z" fill="#000"/></svg>
<div style="position:absolute;left:389px;top:817.0px;width:16px;height:15px;background:#efefef;box-sizing:border-box;border:1.2px solid #6a6a6a;"></div>
<svg style="position:absolute;left:389px;top:817.0px" width="16" height="16" viewBox="0 0 16 16"><path d="M2.6 8.2 L7.4 12 L13.6 2.9" fill="none" stroke="#1a1a1a" stroke-width="2.1" stroke-linejoin="miter"/></svg>
<div class="t" style="left:410.10px;top:817.59px;font-size:14.90px;color:#000;letter-spacing:-0.011px;">Sort based on transformed eigenvalues</div>
<div style="position:absolute;left:389px;top:844.2px;width:16px;height:15px;background:#efefef;box-sizing:border-box;border:1.2px solid #6a6a6a;"></div>
<div class="t" style="left:410.10px;top:844.79px;font-size:14.90px;color:#000;letter-spacing:0.039px;">Conjugate-pair consecutive sort</div>
<div style="position:absolute;left:389px;top:871.4px;width:16px;height:15px;background:#efefef;box-sizing:border-box;border:1.2px solid #6a6a6a;"></div>
<svg style="position:absolute;left:389px;top:871.4px" width="16" height="16" viewBox="0 0 16 16"><path d="M2.6 8.2 L7.4 12 L13.6 2.9" fill="none" stroke="#1a1a1a" stroke-width="2.1" stroke-linejoin="miter"/></svg>
<div class="t" style="left:410.10px;top:871.99px;font-size:14.90px;color:#000;letter-spacing:0.585px;">Mode following</div>
<div style="position:absolute;left:382px;top:903px;width:520px;height:1.3px;background:#dcdcdc;"></div>
<svg style="position:absolute;left:388px;top:913px" width="12" height="14" viewBox="0 0 12 14"><path d="M4.4 3.4 L8.8 7.4 L4.4 11.3" fill="none" stroke="#111" stroke-width="1.7"/></svg>
<div class="t" style="left:414.90px;top:913.15px;font-size:16.60px;color:#214d9c;letter-spacing:0.228px;-webkit-text-stroke:0.45px #214d9c;">Adaptation and Error Estimates</div>
<div style="position:absolute;left:382px;top:940px;width:520px;height:1.3px;background:#dcdcdc;"></div>
<svg style="position:absolute;left:388px;top:950px" width="12" height="14" viewBox="0 0 12 14"><path d="M4.4 3.4 L8.8 7.4 L4.4 11.3" fill="none" stroke="#111" stroke-width="1.7"/></svg>
<div class="t" style="left:413.90px;top:950.15px;font-size:16.60px;color:#214d9c;letter-spacing:0.143px;-webkit-text-stroke:0.45px #214d9c;">Study Extensions</div>
</body></html>
